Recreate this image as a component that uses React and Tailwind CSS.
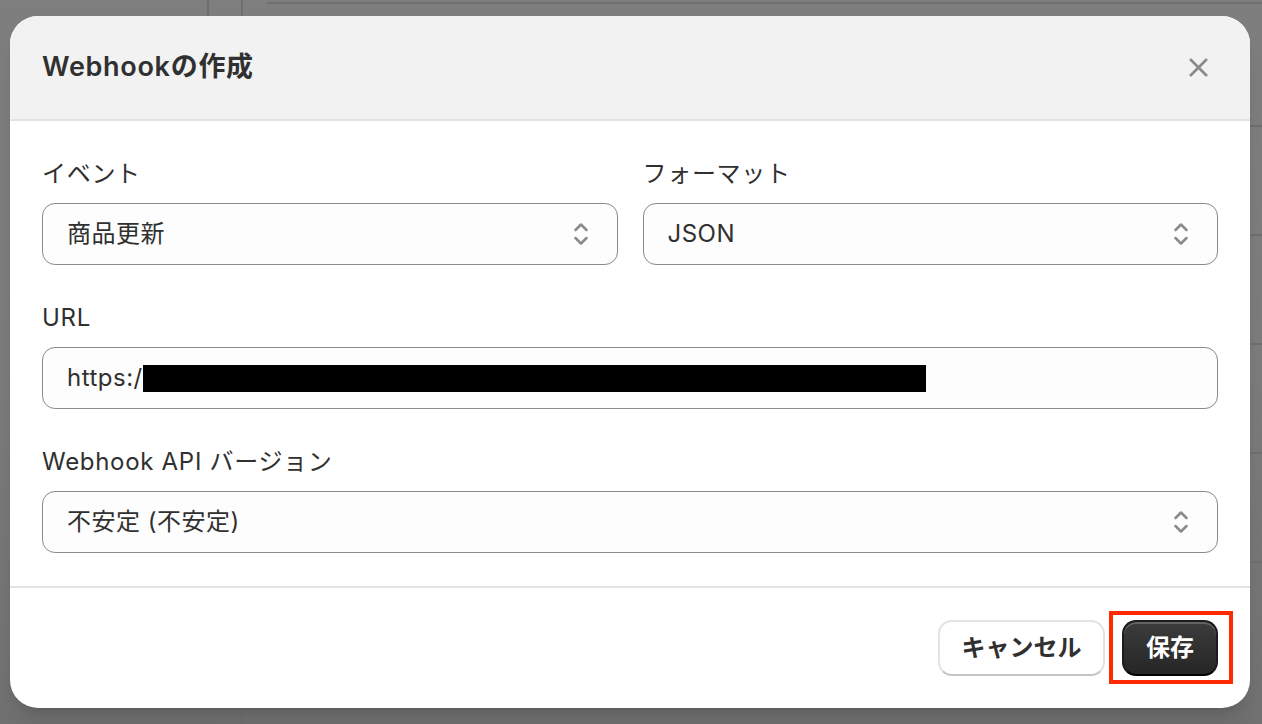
import { X } from 'lucide-react';

const font = { fontFamily: 'Inter, "Noto Sans CJK JP", sans-serif' };

function Chevrons() {
  return (
    <svg width="16" height="26" viewBox="0 0 16 26" fill="none" stroke="#8a8a8a" strokeWidth="2.5" strokeLinecap="round" strokeLinejoin="round">
      <polyline points="2.5,9 8,3.5 13.5,9" />
      <polyline points="2.5,17 8,22.5 13.5,17" />
    </svg>
  );
}

function Field({ label, children }) {
  return (
    <div className="flex flex-col">
      <label className="text-[24px] leading-[30px] tracking-[0.7px] text-[#303030] mb-[14px]">{label}</label>
      {children}
    </div>
  );
}

function SelectBox({ value }) {
  return (
    <div className="h-[62px] flex items-center justify-between pl-[24px] pr-[28px] rounded-[13px] border border-[#8a8a8a] bg-[#fdfdfd] text-[24px] tracking-[0.5px] text-[#303030]">
      <span>{value}</span>
      <Chevrons />
    </div>
  );
}

export default function App() {
  return (
    <div className="relative w-[1262px] h-[724px] overflow-hidden" style={font}>
      {/* dimmed page behind */}
      <div className="flex h-full bg-gradient-to-b from-[#7e7e7e] via-[#7c7c7c] to-[#717171]">
        <div className="w-[209px] border-r-2 border-[#6f6f6f]" />
        <div className="w-[34px] border-r-2 border-[#6f6f6f]" />
        <div className="flex-1 flex flex-col pl-[24px]">
          <div className="mt-[2px] h-[2px] bg-[#6f6f6f]" />
          <div className="h-[123px] border-b-2 border-[#6f6f6f]" />
          <div className="h-[109px] border-b-2 border-[#6f6f6f]" />
          <div className="h-[109px] border-b-2 border-[#6f6f6f]" />
          <div className="h-[109px] border-b-2 border-[#6f6f6f]" />
          <div className="h-[109px] border-b-2 border-[#6f6f6f]" />
        </div>
      </div>

      {/* modal */}
      <div className="absolute left-[10px] top-[16px] w-[1240px] h-[692px] rounded-[28px] bg-white overflow-hidden flex flex-col shadow-xl">
        <div className="h-[105px] shrink-0 bg-[#f2f2f2] border-b-2 border-[#e3e3e3] flex items-center justify-between pl-[32px] pr-[36px]">
          <h2 className="text-[27px] font-semibold text-[#303030] tracking-[0.7px]">Webhookの作成</h2>
          <X size={31} strokeWidth={2} className="text-[#8a8a8a]" />
        </div>

        <div className="flex-1 flex flex-col gap-[38px] pt-[38px] pb-[33px] px-[32px]">
          <div className="grid grid-cols-2 gap-[25px]">
            <Field label="イベント">
              <SelectBox value="商品更新" />
            </Field>
            <Field label="フォーマット">
              <SelectBox value="JSON" />
            </Field>
          </div>
          <Field label="URL">
            <div className="h-[62px] flex items-center pl-[24px] rounded-[13px] border border-[#8a8a8a] bg-[#fdfdfd] text-[24px] tracking-[0.5px] text-[#303030]">
              <span>https:/</span>
              <span className="inline-block w-[783px] h-[27px] bg-black" />
            </div>
          </Field>
          <Field label="Webhook API バージョン">
            <SelectBox value="不安定 (不安定)" />
          </Field>
        </div>

        <div className="h-[122px] shrink-0 border-t-2 border-[#e3e3e3] flex items-center justify-end gap-[17px] pr-[32px]">
          <button className="w-[167px] h-[56px] rounded-[14px] bg-white border-2 border-[#e3e3e3] border-b-[#c4c4c4] text-[24px] font-semibold text-[#303030]">
            キャンセル
          </button>
          <span className="relative inline-flex">
            <button className="w-[96px] h-[56px] rounded-[14px] bg-gradient-to-b from-[#3c3c3c] to-[#262626] border-2 border-[#1c1c1c] border-b-[#000] shadow-[inset_0_2px_0_rgba(255,255,255,0.2)] text-[24px] font-semibold text-white">
              保存
            </button>
            <span className="absolute left-[-13px] right-[-15px] top-[-9px] bottom-[-8px] border-4 border-[#ff2a00] pointer-events-none" />
          </span>
        </div>
      </div>
    </div>
  );
}
